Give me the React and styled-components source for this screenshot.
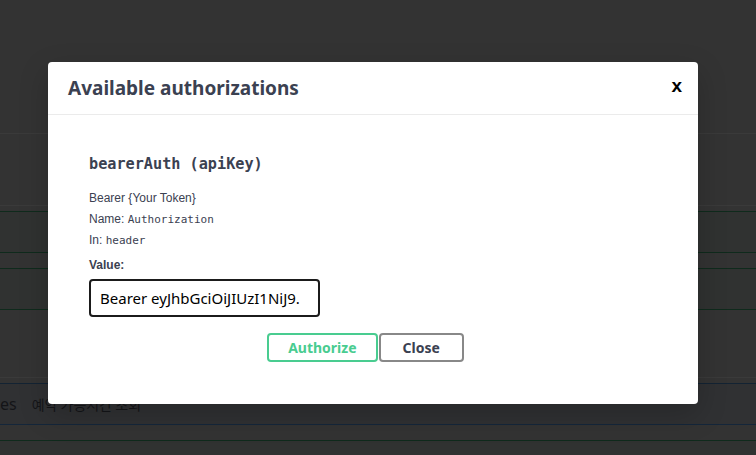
import React from 'react'
import styled, { createGlobalStyle } from 'styled-components'

const GlobalStyle = createGlobalStyle`
  html, body {
    margin: 0;
    padding: 0;
    background: #333333;
  }
  body {
    font-family: "Noto Sans", "Liberation Sans", sans-serif;
  }
`;

const Page = styled.div`
  position: relative;
  width: 756px;
  height: 455px;
  overflow: hidden;
  background: #333333;
`;

const Backdrop = styled.div`
  display: flex;
  flex-direction: column;
`;

const Rule = styled.div`
  height: 1px;
  margin-top: ${p => p.$gap}px;
  background: ${p => p.$color || '#3a3a3a'};
`;

const OpBlock = styled.div`
  height: 40px;
  margin-top: ${p => p.$gap}px;
  border-top: 1px solid ${p => (p.$kind === 'get' ? '#132333' : '#0f2a1c')};
  border-bottom: 1px solid ${p => (p.$kind === 'get' ? '#14263a' : '#0f2a1c')};
  background: ${p => (p.$kind === 'get' ? '#303133' : '#303231')};
  display: flex;
  align-items: center;
  gap: 15px;
  color: #141518;
`;

const Path = styled.span`
  font-size: 16px;
`;

const Summary = styled.span`
  font-size: 14px;
  font-family: "Noto Sans CJK KR", sans-serif;
`;

const Overlay = styled.div`
  position: absolute;
  inset: 0;
`;

const Modal = styled.div`
  position: absolute;
  left: 48px;
  top: 62px;
  width: 650px;
  background: #fff;
  border-radius: 4px;
  box-shadow: 0 10px 30px 0 rgba(0, 0, 0, 0.2);
`;

const Header = styled.div`
  height: 52px;
  display: flex;
  align-items: center;
  justify-content: space-between;
  padding: 0 16px 0 20px;
  border-bottom: 1px solid #ebebeb;
`;

const Title = styled.h3`
  margin: 0;
  font-size: 19px;
  font-weight: 700;
  color: #3b4151;
`;

const CloseX = styled.button`
  border: none;
  background: none;
  padding: 0;
  margin-top: -4px;
  font-family: "Liberation Sans", sans-serif;
  font-size: 19px;
  font-weight: 700;
  color: #000;
  cursor: pointer;
`;

const Body = styled.div`
  padding: 39px 20px 42px 41px;
`;

const SchemeTitle = styled.h4`
  margin: 0 0 14px;
  line-height: 20px;
  font-family: "DejaVu Sans Mono", monospace;
  font-size: 15.2px;
  font-weight: 700;
  color: #3b4151;
`;

const Line = styled.div`
  font-family: "Liberation Sans", sans-serif;
  font-size: 12px;
  line-height: 21px;
  color: #3b4151;
`;

const Code = styled.code`
  font-family: "DejaVu Sans Mono", monospace;
  font-size: 11px;
`;

const Label = styled.label`
  display: block;
  margin-top: 4px;
  font-family: "Liberation Sans", sans-serif;
  font-size: 12px;
  line-height: 21px;
  font-weight: 700;
  color: #3b4151;
`;

const Input = styled.input`
  display: block;
  box-sizing: border-box;
  margin-top: 3px;
  width: 231px;
  height: 38px;
  padding: 0 9px;
  border: 2px solid #1b1b1b;
  border-radius: 4px;
  font-family: "Noto Sans", sans-serif;
  font-size: 15px;
  color: #000;
  outline: none;
`;

const BtnRow = styled.div`
  display: flex;
  justify-content: center;
  margin-top: 16px;
  padding-right: 36px;
`;

const Btn = styled.button`
  height: 29px;
  box-sizing: border-box;
  margin: 0 0 0 ${p => (p.$primary ? 0 : 1)}px;
  padding: 0 ${p => (p.$primary ? 19 : 22)}px;
  border: 2px solid ${p => (p.$primary ? '#49cc90' : '#888888')};
  border-radius: 4px;
  background: transparent;
  font-family: "Noto Sans", sans-serif;
  font-size: 14px;
  font-weight: 700;
  color: ${p => (p.$primary ? '#49cc90' : '#3b4151')};
  cursor: pointer;
`;

export default function App() {
  return (
    <Page>
      <GlobalStyle />
      <Backdrop>
        <Rule $gap={133} />
        <Rule $gap={71} />
        <OpBlock $gap={5} />
        <OpBlock $gap={15} />
        <Rule $gap={67} />
        <OpBlock $gap={5} $kind="get">
          <Path>es</Path>
          <Summary>예약 가능시간 조회</Summary>
        </OpBlock>
        <OpBlock $gap={15} />
      </Backdrop>
      <Overlay>
        <Modal>
          <Header>
            <Title>Available authorizations</Title>
            <CloseX>x</CloseX>
          </Header>
          <Body>
            <SchemeTitle>bearerAuth (apiKey)</SchemeTitle>
            <Line>Bearer {'{'}Your Token{'}'}</Line>
            <Line>Name: <Code>Authorization</Code></Line>
            <Line>In: <Code>header</Code></Line>
            <Label>Value:</Label>
            <Input defaultValue="Bearer eyJhbGciOiJIUzI1NiJ9." />
            <BtnRow>
              <Btn $primary>Authorize</Btn>
              <Btn>Close</Btn>
            </BtnRow>
          </Body>
        </Modal>
      </Overlay>
    </Page>
  );
}
